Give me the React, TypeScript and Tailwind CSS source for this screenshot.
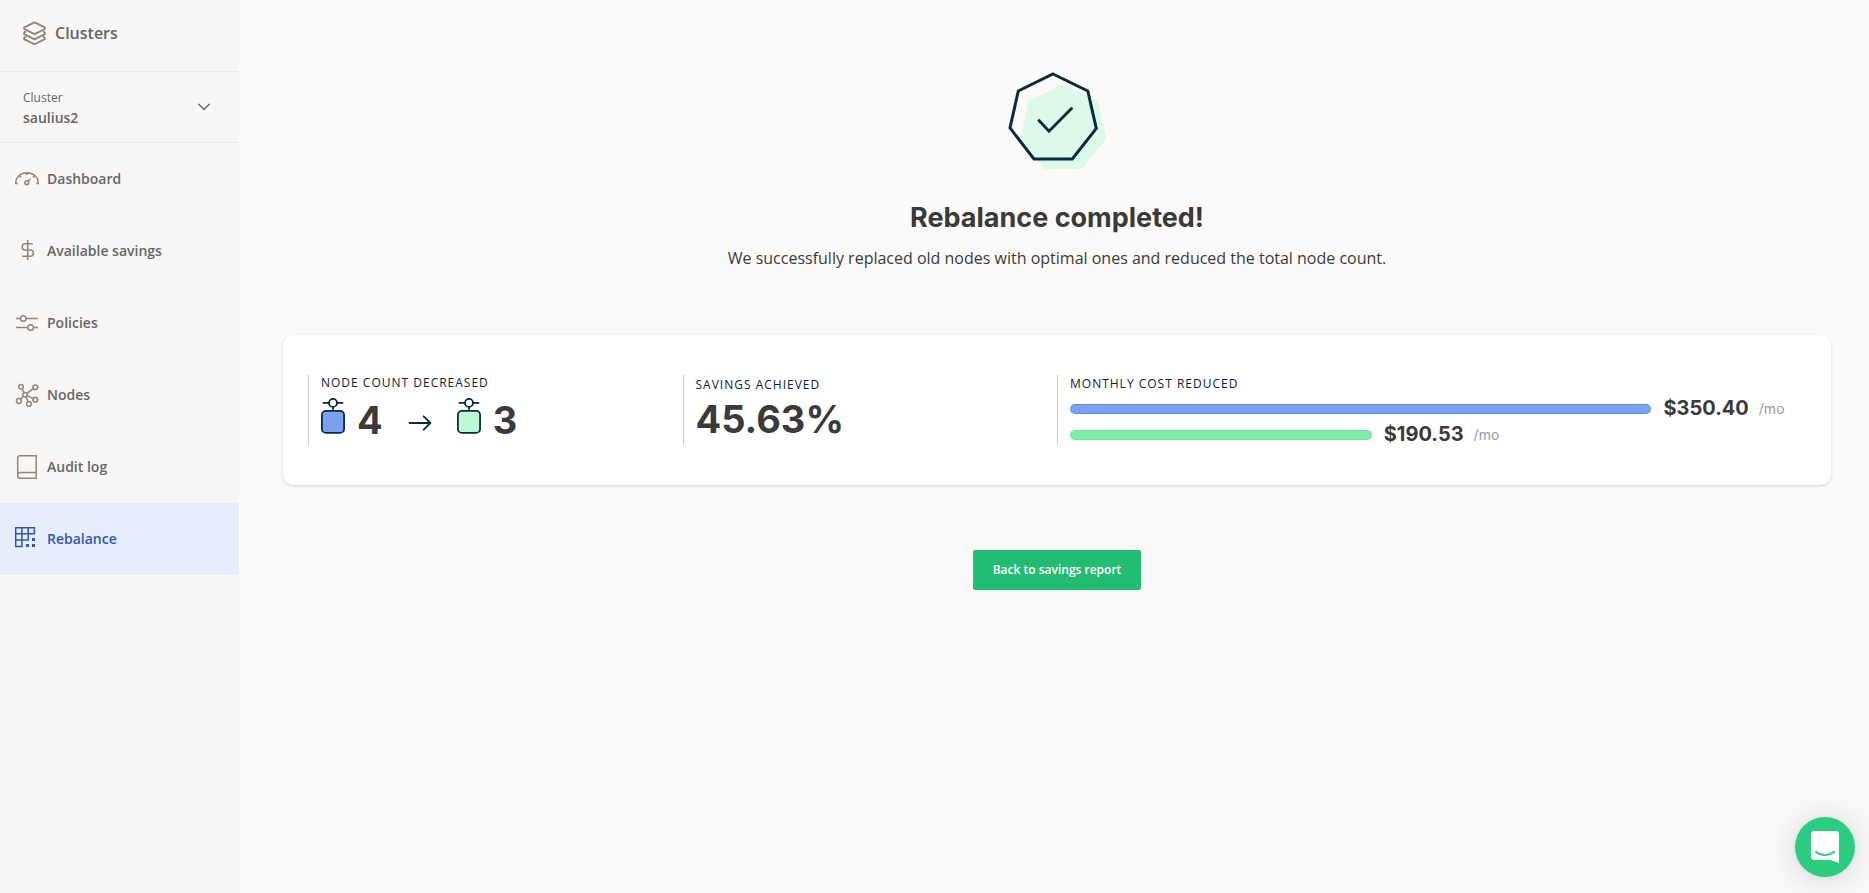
import React from "react";

type IconProps = { children: React.ReactNode };

function NavIcon({ children }: IconProps) {
  return (
    <svg
      className="size-6 shrink-0"
      viewBox="0 0 24 24"
      fill="none"
      stroke="currentColor"
      strokeWidth="1.5"
      aria-hidden="true"
    >
      {children}
    </svg>
  );
}

const navItems = [
  {
    label: "Dashboard",
    icon: (
      <NavIcon>
        <path d="M2.8 16.4H.8V16C.8 9.8 5.8 5.7 12 5.7S23.2 9.8 23.2 16v.4h-2M12 5.7v2.3M4.7 9l1.5 1.5M19.3 9l-1.5 1.5M13.2 14.2l2.5-2.4" />
        <circle cx="11.8" cy="15.7" r="1.9" />
      </NavIcon>
    ),
  },
  {
    label: "Available savings",
    icon: (
      <NavIcon>
        <path d="M12.7 1v20M17.8 4.8h-7.5a3.1 3.1 0 0 0 0 6.2h5a3.15 3.15 0 0 1 0 6.3H7" />
      </NavIcon>
    ),
  },
  {
    label: "Policies",
    icon: (
      <NavIcon>
        <path d="M1 7.5h4.5M11 7.5h12M1 16.500h11.800M18.400 16.500H23" />
        <circle cx="8.3" cy="7.5" r="2.8" />
        <circle cx="15.6" cy="16.5" r="2.8" />
      </NavIcon>
    ),
  },
  {
    label: "Nodes",
    icon: (
      <NavIcon>
        <circle cx="6" cy="3.7" r="2.3" />
        <circle cx="20.3" cy="4.3" r="2.4" />
        <circle cx="10" cy="11.7" r="2.2" />
        <circle cx="3.9" cy="18" r="2.4" />
        <circle cx="14" cy="20.8" r="2.4" />
        <circle cx="20.3" cy="16.7" r="2.4" />
        <path d="M7 5.8l2 3.9M18.3 5.600l-6.400 4.800M8.400 13.300l-2.800 3M11 13.700l2 4.900M12 12.600l6.200 3" />
      </NavIcon>
    ),
  },
  {
    label: "Audit log",
    icon: (
      <NavIcon>
        <path d="M21.2.8H5A2.3 2.3 0 0 0 2.7 3v18A2.3 2.3 0 0 0 5 23.300h16.200zM2.700 20A2.300 2.300 0 0 1 5 17.500h16.200" />
      </NavIcon>
    ),
  },
  {
    label: "Rebalance",
    active: true,
    icon: (
      <NavIcon>
        <path d="M.7.7h18.700v6.100H.7zM.7 6.800h12.500v6.200H.7zM.7 13h6.200v6.400H.7zM6.900.7V13M13.200.7v6.100" />
        <path
          d="M11 17h3v3h-3zM17 17h3v3h-3zM17 11h3v3h-3z"
          fill="currentColor"
          stroke="none"
        />
      </NavIcon>
    ),
  },
];

function Sidebar() {
  return (
    <aside className="w-[239px] shrink-0 bg-[#f8f7f5] text-[#666666]">
      <a
        href="#clusters"
        className="flex h-[72px] items-center gap-2 border-b border-[#ebeae8] px-[23px] pb-1.5 text-base font-semibold"
      >
        <svg
          className="size-6 shrink-0 text-[#8f857a]"
          viewBox="0 0 24 24"
          fill="none"
          stroke="currentColor"
          strokeWidth="1.9"
          strokeLinejoin="round"
          aria-hidden="true"
        >
          <path d="M11.500 1.400l10.300 5v1.600L11.500 13.200 1.200 8V6.400z" />
          <path d="M3 10.300l-1.800 1.200v1.600l10.300 5.300 10.300-5.300v-1.600L20 10.300" />
          <path d="M3 15.500l-1.800 1.200v1.400l10.300 5.200 10.300-5.200v-1.400L20 15.500" />
        </svg>
        Clusters
      </a>
      <button
        type="button"
        className="flex h-[71px] w-full items-center justify-between border-b border-[#ebeae8] pr-[29px] pl-[23px] text-left"
      >
        <span className="flex flex-col pt-px">
          <span className="text-xs leading-5">Cluster</span>
          <span className="text-sm leading-[19px] font-semibold">saulius2</span>
        </span>
        <svg
          className="h-2 w-3"
          viewBox="0 0 12 8"
          fill="none"
          stroke="currentColor"
          strokeWidth="1.4"
          strokeLinecap="round"
          aria-hidden="true"
        >
          <path d="M.8 1.300L6 6.500l5.200-5.200" />
        </svg>
      </button>
      <nav>
        {navItems.map((item) => (
          <a
            key={item.label}
            href="#"
            aria-current={item.active ? "page" : undefined}
            className={
              item.active
                ? "flex h-[72px] items-center gap-2 bg-[#e6eefc] px-[15px] text-sm font-semibold text-[#2f58ac]"
                : "flex h-[72px] items-center gap-2 px-[15px] text-sm font-semibold"
            }
          >
            <span className={item.active ? "text-[#2f58ac]" : "text-[#8f857a]"}>
              {item.icon}
            </span>
            {item.label}
          </a>
        ))}
      </nav>
    </aside>
  );
}

function NodeGlyph({ fill }: { fill: string }) {
  return (
    <svg
      className="h-9 w-6 shrink-0"
      viewBox="0 0 24 36"
      fill="none"
      stroke="#0b2b3c"
      strokeWidth="1.8"
      aria-hidden="true"
    >
      <path d="M1.700 4.900H8M16 4.900h6.300M12 9v4" />
      <circle cx="12" cy="4.9" r="4" />
      <rect x=".9" y="12.9" width="22.2" height="22" rx="4" fill={fill} />
    </svg>
  );
}

function CostBar({ amount, bar }: { amount: string; bar: string }) {
  return (
    <div className="flex h-[26px] items-center">
      <div className={bar} />
      <span className="ml-3 pb-0.5 font-[Inter,sans-serif] text-xl leading-6 font-bold text-[#3a3a3a]">
        {amount}
      </span>
      <span className="ml-2.5 font-[Inter,sans-serif] text-sm leading-6 text-[#9b9b9b]">
        /mo
      </span>
    </div>
  );
}

const statLabel = "text-xs leading-4 tracking-[1px] text-[#0b2330] uppercase";
const statValue =
  "font-[Inter,sans-serif] text-[38px] leading-10 font-bold text-[#3a3a3a]";

export default function App() {
  return (
    <div className="flex min-h-screen bg-[#fbfaf8] font-['Open_Sans',sans-serif] text-[#3a3a3a]">
      <Sidebar />
      <main className="flex min-w-0 grow flex-col items-center pt-[70px] pr-[38px] pb-10 pl-11">
        <svg
          className="size-[100px]"
          viewBox="0 0 100 100"
          fill="none"
          aria-hidden="true"
        >
          <path
            d="M56 14l35 17 8.500 37.500L75 99H37L13.500 69 21.500 31z"
            fill="#dcfae8"
          />
          <path
            d="M46 4l34.800 17 8.500 37.500L65.300 89H27L3 58l8.300-37z"
            stroke="#0b2b3c"
            strokeWidth="3"
          />
          <path
            d="M32 50.500l10 10.700L64.500 38.500"
            stroke="#0b2b3c"
            strokeWidth="3"
            strokeLinecap="round"
          />
        </svg>
        <h1 className="mt-8 font-[Inter,sans-serif] text-[27px] leading-8 font-bold">
          Rebalance completed!
        </h1>
        <p className="mt-3 text-base leading-6">
          We successfully replaced old nodes with optimal ones and reduced the
          total node count.
        </p>

        <section className="mt-[65px] grid w-full grid-cols-4 rounded-[10px] bg-white px-[25px] py-10 shadow-[0_1px_3px_rgba(0,0,0,0.16)]">
          <div className="flex h-[70px] flex-col border-l border-[#cccccc] pl-3">
            <h2 className={statLabel}>Node count decreased</h2>
            <div className="mt-px flex items-center">
              <NodeGlyph fill="#7ba0f0" />
              <span className={`${statValue} ml-3 pt-2`}>4</span>
              <svg
                className="mx-[25px] mt-3.5 h-4 w-6"
                viewBox="0 0 24 16"
                fill="none"
                stroke="#0b2b3c"
                strokeWidth="1.8"
                strokeLinecap="round"
                strokeLinejoin="round"
                role="img"
                aria-label="to"
              >
                <path d="M1.500 8h21M15.700 1.300L22.500 8l-6.800 6.700" />
              </svg>
              <NodeGlyph fill="#bdf9d4" />
              <span className={`${statValue} ml-3 pt-2`}>3</span>
            </div>
          </div>
          <div className="flex h-[70px] flex-col border-l border-[#cccccc] pt-0.5 pl-3">
            <h2 className={statLabel}>Savings achieved</h2>
            <p className={`${statValue} mt-1.5`}>45.63%</p>
          </div>
          <div className="col-span-2 flex h-[70px] flex-col border-l border-[#cccccc] pt-px pl-3">
            <h2 className={statLabel}>Monthly cost reduced</h2>
            <div className="mt-1">
              <CostBar
                amount="$350.40"
                bar="h-2.5 w-[79%] rounded-full border-y border-[#5f8bea] bg-[#7ba0f0]"
              />
              <CostBar
                amount="$190.53"
                bar="h-2.5 w-[41%] rounded-full border-y border-[#6be39c] bg-[#7eeeaa]"
              />
            </div>
          </div>
        </section>

        <button
          type="button"
          className="mt-[65px] h-10 rounded-xs bg-[#22bd73] px-5 text-xs font-semibold text-white"
        >
          Back to savings report
        </button>
      </main>

      <button
        type="button"
        aria-label="Open chat"
        className="fixed right-3.5 bottom-4 flex size-[60px] items-center justify-center rounded-full bg-[#2bce80] shadow-[0_1px_6px_rgba(0,0,0,0.06),0_2px_32px_rgba(0,0,0,0.16)]"
      >
        <svg
          className="h-8 w-7"
          viewBox="0 0 28 32"
          fill="none"
          aria-hidden="true"
        >
          <path
            d="M3.500 0h21A3.500 3.500 0 0 1 28 3.500V32s-3-1-8.500-3h-16A3.500 3.500 0 0 1 0 25.500v-22A3.500 3.500 0 0 1 3.500 0z"
            fill="#fff"
          />
          <path
            d="M4.800 20.800c5.200 4.300 13.200 4.300 18.400 0"
            stroke="#2bce80"
            strokeWidth="1.8"
            strokeLinecap="round"
          />
        </svg>
      </button>
    </div>
  );
}
